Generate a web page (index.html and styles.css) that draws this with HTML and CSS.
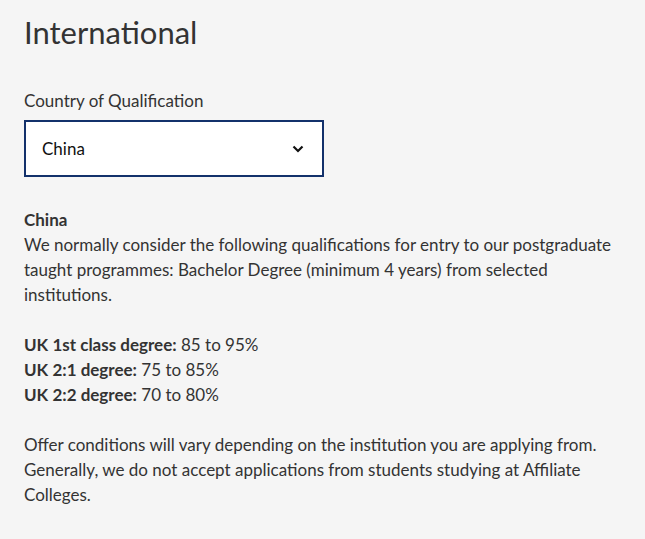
FILE: index.html
```html
<!DOCTYPE html>
<html lang="en">
<head>
<meta charset="utf-8">
<title>International</title>
<link rel="stylesheet" href="styles.css">
</head>
<body>
<main class="page">
  <h1 class="title">International</h1>
  <label class="label" for="country">Country of Qualification</label>
  <div class="select">
    <span class="select-value">China</span>
    <svg class="chevron" width="12" height="8" viewBox="0 0 12 8"><path d="M1.5 1.5 L6 6 L10.5 1.5" fill="none" stroke="#111" stroke-width="2.2"/></svg>
  </div>
  <section class="info">
    <p><strong>China</strong><br>We normally consider the following qualifications for entry to our postgraduate taught programmes: Bachelor Degree (minimum 4 years) from selected institutions.</p>
    <p><strong>UK 1st class degree:</strong> 85 to 95%<br><strong>UK 2:1 degree:</strong> 75 to 85%<br><strong>UK 2:2 degree:</strong> 70 to 80%</p>
    <p>Offer conditions will vary depending on the institution you are applying from. Generally, we do not accept applications from students studying at Affiliate Colleges.</p>
  </section>
</main>
</body>
</html>
```
FILE: styles.css
```css
html, body {
  margin: 0;
  padding: 0;
  background: #f5f5f5;
}
body {
  font-family: Lato, "Noto Sans", sans-serif;
  color: #333333;
}
.page {
  padding: 12px 24px 0 24px;
  width: 600px;
}
.title {
  margin: 0;
  font-size: 31px;
  font-weight: 400;
  line-height: 40px;
  color: #333;
}
.label {
  display: block;
  margin-top: 37px;
  font-size: 17px;
  line-height: 24px;
}
.select {
  display: flex;
  align-items: center;
  justify-content: space-between;
  box-sizing: border-box;
  width: 300px;
  height: 57px;
  margin-top: 7px;
  padding: 0 18px 0 16px;
  background: #fff;
  border: 2px solid #13316b;
}
.select-value {
  font-size: 17px;
  color: #111;
}
.chevron {
  display: block;
}
.info {
  margin-top: 30px;
  font-size: 17px;
  line-height: 25px;
}
.info p {
  margin: 0 0 25px 0;
}
.info strong {
  font-weight: 700;
}
```
